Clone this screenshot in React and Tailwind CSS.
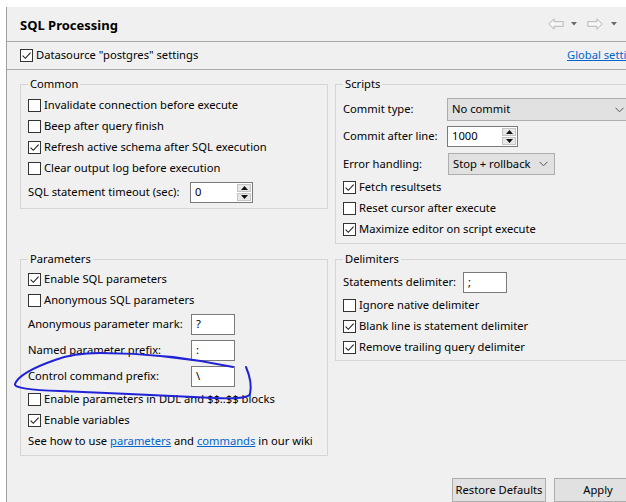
import React from "react";

// Eclipse-style "SQL Processing" preference page

const Check = ({ checked }) => (
  <span className="w-[13px] h-[13px] shrink-0 border border-[#333333] bg-white flex items-center justify-center">
    {checked && (
      <svg width="11" height="11" viewBox="0 0 11 11">
        <path d="M1.6 5.6 L4.3 8.3 L9.6 2.6" fill="none" stroke="#222" strokeWidth="1.1" />
      </svg>
    )}
  </span>
);

const CheckRow = ({ checked, children }) => (
  <div className="h-[21px] flex items-center gap-[3px] whitespace-nowrap">
    <Check checked={checked} />
    <span>{children}</span>
  </div>
);

const Spin = () => (
  <div className="flex flex-col w-[14px] h-[17px] gap-[1px] mr-[1px]">
    <span className="flex-1 bg-[#e8e8e8] border border-[#c4c4c4] flex items-center justify-center">
      <svg width="7" height="4" viewBox="0 0 7 4">
        <path d="M0 4 L3.5 0 L7 4Z" fill="#111" />
      </svg>
    </span>
    <span className="flex-1 bg-[#e8e8e8] border border-[#c4c4c4] flex items-center justify-center">
      <svg width="7" height="4" viewBox="0 0 7 4">
        <path d="M0 0 L3.5 4 L7 0Z" fill="#111" />
      </svg>
    </span>
  </div>
);

const TextBox = ({ value, className = "", spin }) => (
  <div className={`h-[21px] shrink-0 border border-[#7a7a7a] bg-white flex items-center pl-[4px] ${className}`}>
    <span className="flex-1">{value}</span>
    {spin && <Spin />}
  </div>
);

const Chevron = () => (
  <svg width="9" height="6" viewBox="0 0 9 6">
    <path d="M0.5 0.8 L4.5 4.8 L8.5 0.8" fill="none" stroke="#555" strokeWidth="1" />
  </svg>
);

const Select = ({ value, className = "" }) => (
  <div className={`shrink-0 border border-[#adadad] bg-[#e1e1e1] flex items-center justify-between pl-[4px] pr-[6px] ${className}`}>
    <span>{value}</span>
    <Chevron />
  </div>
);

const Group = ({ title, className = "", children }) => (
  <fieldset className={`border border-[#d5d5d5] pl-[7px] ${className}`}>
    <legend className="px-[2px] leading-[16px]">{title}</legend>
    {children}
  </fieldset>
);

const NavArrow = ({ dir }) => (
  <svg width="16" height="12" viewBox="0 0 16 12">
    {dir === "left" ? (
      <path d="M0.8 6 L6 0.8 L6 3.7 L15.2 3.7 L15.2 8.3 L6 8.3 L6 11.2 Z" fill="#f7f7f7" stroke="#b5b5b5" strokeWidth="1" />
    ) : (
      <path d="M15.2 6 L10 0.8 L10 3.7 L0.8 3.7 L0.8 8.3 L10 8.3 L10 11.2 Z" fill="#f7f7f7" stroke="#b5b5b5" strokeWidth="1" />
    )}
  </svg>
);

const DropTri = () => (
  <svg width="6" height="4" viewBox="0 0 6 4">
    <path d="M0 0 L6 0 L3 3.5Z" fill="#6b6b6b" />
  </svg>
);

const Link = ({ children }) => <span className="text-[#0066cc] underline">{children}</span>;

export default function App() {
  return (
    <div className="relative w-[626px] h-[502px] overflow-hidden bg-white pt-[7px] pl-[6px] flex text-[11.2px] text-black font-['Segoe_UI','Noto_Sans',sans-serif]">
      <div className="flex-1 flex flex-col border-l border-[#a0a0a0] bg-[#f0f0f0] min-w-0">
        <div className="h-[35px] shrink-0 flex items-center justify-between pl-[13px] pr-[9px] pt-[3px] border-b border-[#a9a9a9]">
          <span className="text-[13px] font-bold">SQL Processing</span>
          <div className="flex items-center pb-[3px]">
            <NavArrow dir="left" />
            <span className="ml-[7px]"><DropTri /></span>
            <span className="ml-[10px]"><NavArrow dir="right" /></span>
            <span className="ml-[8px]"><DropTri /></span>
          </div>
        </div>

        <div className="h-[28px] shrink-0 flex items-center pl-[13px] border-b border-[#a9a9a9] whitespace-nowrap">
          <div className="w-[547px] shrink-0 flex items-center gap-[3px]">
            <Check checked />
            <span>Datasource "postgres" settings</span>
          </div>
          <Link>Global settings</Link>
        </div>

        <div className="grid grid-cols-[308px_300px] gap-[7px] items-start pl-[13px] pt-[6px]">
          <Group title="Common" className="pt-[3px] pb-[3px]">
            <CheckRow>Invalidate connection before execute</CheckRow>
            <CheckRow>Beep after query finish</CheckRow>
            <CheckRow checked>Refresh active schema after SQL execution</CheckRow>
            <CheckRow>Clear output log before execution</CheckRow>
            <div className="h-[26px] flex items-center">
              <span className="w-[162px] shrink-0">SQL statement timeout (sec):</span>
              <TextBox value="0" spin className="w-[63px]" />
            </div>
          </Group>

          <Group title="Scripts" className="pt-[5px] pb-[3px]">
            <div className="h-[25px] flex items-center">
              <span className="w-[104px] shrink-0">Commit type:</span>
              <Select value="No commit" className="w-[184px] h-[23px]" />
            </div>
            <div className="h-[29px] flex items-center">
              <span className="w-[104px] shrink-0">Commit after line:</span>
              <TextBox value="1000" spin className="w-[71px]" />
            </div>
            <div className="h-[26px] flex items-center">
              <span className="w-[105px] shrink-0">Error handling:</span>
              <Select value="Stop + rollback" className="w-[107px] h-[22px]" />
            </div>
            <CheckRow checked>Fetch resultsets</CheckRow>
            <CheckRow>Reset cursor after execute</CheckRow>
            <CheckRow checked>Maximize editor on script execute</CheckRow>
          </Group>

          <Group title="Parameters" className="pt-[2px] pb-[4px]">
            <CheckRow checked>Enable SQL parameters</CheckRow>
            <CheckRow>Anonymous SQL parameters</CheckRow>
            <div className="h-[26px] flex items-center">
              <span className="w-[163px] shrink-0">Anonymous parameter mark:</span>
              <TextBox value="?" className="w-[44px]" />
            </div>
            <div className="h-[26px] flex items-center">
              <span className="w-[163px] shrink-0">Named parameter prefix:</span>
              <TextBox value=":" className="w-[44px]" />
            </div>
            <div className="h-[26px] flex items-center">
              <span className="w-[163px] shrink-0">Control command prefix:</span>
              <TextBox value="\" className="w-[44px]" />
            </div>
            <CheckRow>Enable parameters in DDL and $$..$$ blocks</CheckRow>
            <CheckRow checked>Enable variables</CheckRow>
            <div className="h-[20px] flex items-center whitespace-nowrap">
              <span>
                See how to use <Link>parameters</Link> and <Link>commands</Link> in our wiki
              </span>
            </div>
          </Group>

          <Group title="Delimiters" className="pt-[3px] pb-[2px]">
            <div className="h-[25px] flex items-center">
              <span className="w-[120px] shrink-0">Statements delimiter:</span>
              <TextBox value=";" className="w-[44px]" />
            </div>
            <CheckRow>Ignore native delimiter</CheckRow>
            <CheckRow checked>Blank line is statement delimiter</CheckRow>
            <CheckRow checked>Remove trailing query delimiter</CheckRow>
          </Group>
        </div>

        <div className="mt-auto flex gap-[8px] pl-[445px] shrink-0">
          <button className="w-[94px] h-[24px] shrink-0 border border-[#adadad] bg-[#e1e1e1]">Restore Defaults</button>
          <button className="w-[88px] h-[24px] shrink-0 border border-[#adadad] bg-[#e1e1e1]">Apply</button>
        </div>
      </div>

      {/* hand-drawn highlight around "Control command prefix" */}
      <svg className="absolute left-0 top-0 pointer-events-none" width="626" height="502" viewBox="0 0 626 502">
        <path
          d="M233 367 C190 358 140 353 100 353 C80 353 68 355 55 360 C35 367 18 376 15 384 C14 388 30 390 60 391 C110 393 170 396 215 398 C235 399 248 398 250 394 C252 385 249 374 246 367"
          fill="none"
          stroke="#1f22d6"
          strokeWidth="2"
          strokeLinecap="round"
        />
      </svg>
    </div>
  );
}
